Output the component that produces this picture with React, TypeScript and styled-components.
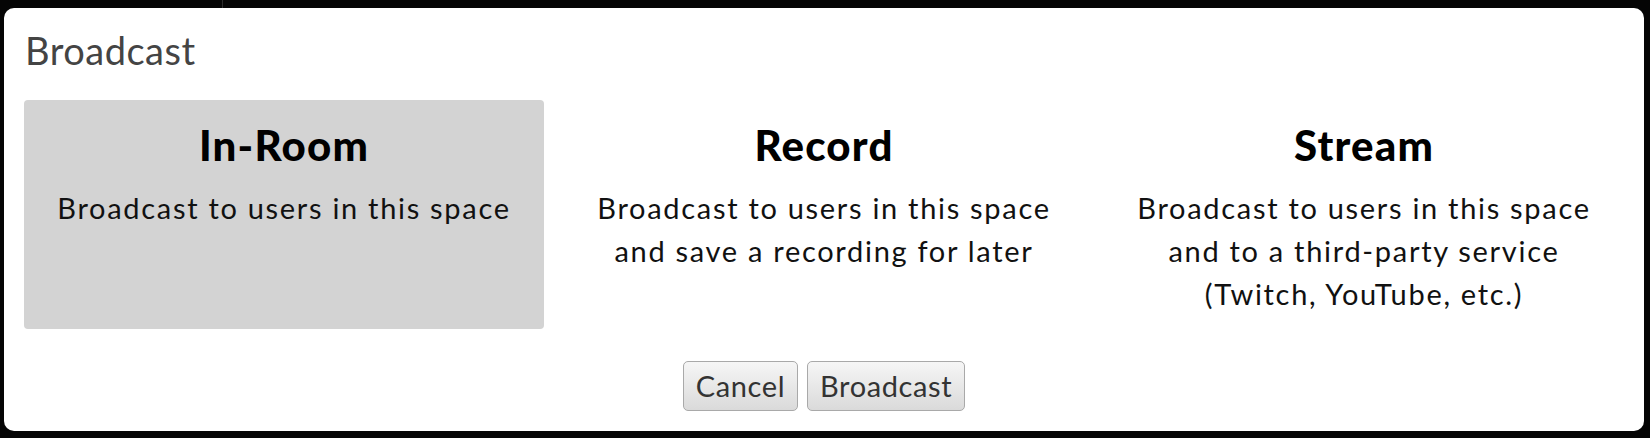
import React, { useState } from 'react';
import styled, { createGlobalStyle } from 'styled-components';

const GlobalStyle = createGlobalStyle`
  html, body {
    margin: 0;
    padding: 0;
    background: #000;
  }
  body {
    font-family: Lato, "Noto Sans", sans-serif;
  }
`;

const Backdrop = styled.div`
  width: 1650px;
  height: 438px;
  background: #050505;
  display: flex;
  flex-direction: column;
`;

const TopStrip = styled.div`
  height: 8px;
  display: flex;
`;

const StripPane = styled.div`
  width: 222px;
  border-right: 1px solid #2c2c2c;
`;

const Dialog = styled.div`
  margin-left: 4px;
  width: 1640px;
  height: 423px;
  box-sizing: border-box;
  padding: 20px;
  background: #fff;
  border-radius: 10px;
  display: flex;
  flex-direction: column;
`;

const Title = styled.h1`
  margin: 0 0 28px 1px;
  font-size: 38px;
  line-height: 44px;
  font-weight: 400;
  letter-spacing: 0.5px;
  color: #444;
`;

const Options = styled.div`
  display: flex;
  gap: 20px;
`;

const Option = styled.button<{ $selected: boolean }>`
  width: 520px;
  height: 229px;
  box-sizing: border-box;
  padding: 20px 0 0;
  border: none;
  border-radius: 4px;
  background: ${(p) => (p.$selected ? '#d3d3d3' : 'transparent')};
  font-family: inherit;
  text-align: center;
  cursor: pointer;
  display: flex;
  flex-direction: column;
  align-items: center;
`;

const OptionName = styled.div`
  font-size: 42px;
  line-height: 50px;
  font-weight: 900;
  letter-spacing: 1.2px;
  color: #000;
`;

const OptionText = styled.div`
  margin-top: 16px;
  font-size: 29px;
  line-height: 43px;
  letter-spacing: 1.7px;
  color: #111;
  white-space: nowrap;
`;

const Actions = styled.div`
  margin-top: 32px;
  display: flex;
  justify-content: center;
  gap: 9px;
`;

const Button = styled.button`
  height: 50px;
  box-sizing: border-box;
  padding: 0 12px;
  border: 1px solid #a9a9a9;
  border-radius: 5px;
  background: linear-gradient(#f6f6f6, #dadada);
  font-family: inherit;
  font-size: 29px;
  line-height: 44px;
  letter-spacing: 0.6px;
  color: #333;
  cursor: pointer;
`;

const modes = [
  { id: 'room', name: 'In-Room', lines: ['Broadcast to users in this space'] },
  {
    id: 'record',
    name: 'Record',
    lines: ['Broadcast to users in this space', 'and save a recording for later'],
  },
  {
    id: 'stream',
    name: 'Stream',
    lines: [
      'Broadcast to users in this space',
      'and to a third-party service',
      '(Twitch, YouTube, etc.)',
    ],
  },
];

const App: React.FC = () => {
  const [mode, setMode] = useState('room');

  return (
    <>
      <GlobalStyle />
      <Backdrop>
        <TopStrip>
          <StripPane />
        </TopStrip>
        <Dialog>
          <Title>Broadcast</Title>
          <Options>
            {modes.map((m) => (
              <Option key={m.id} $selected={mode === m.id} onClick={() => setMode(m.id)}>
                <OptionName>{m.name}</OptionName>
                <OptionText>
                  {m.lines.map((l) => (
                    <div key={l}>{l}</div>
                  ))}
                </OptionText>
              </Option>
            ))}
          </Options>
          <Actions>
            <Button>Cancel</Button>
            <Button>Broadcast</Button>
          </Actions>
        </Dialog>
      </Backdrop>
    </>
  );
};

export default App;
